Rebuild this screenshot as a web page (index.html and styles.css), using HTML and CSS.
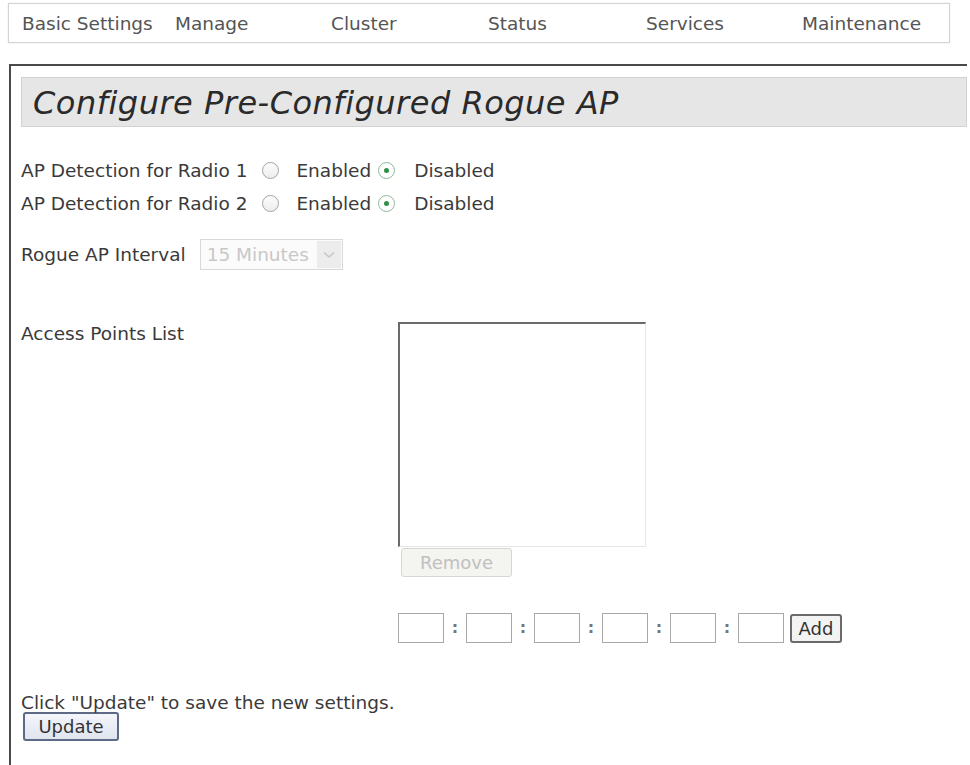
FILE: index.html
```html
<!DOCTYPE html>
<html>
<head>
<meta charset="utf-8">
<link rel="stylesheet" href="styles.css">
</head>
<body>
<nav class="nav">
  <span class="nav-item w1">Basic Settings</span>
  <span class="nav-item w2">Manage</span>
  <span class="nav-item w3">Cluster</span>
  <span class="nav-item w4">Status</span>
  <span class="nav-item w5">Services</span>
  <span class="nav-item">Maintenance</span>
</nav>
<div class="panel">
  <h1 class="title">Configure Pre-Configured Rogue AP</h1>
  <div class="content">
    <div class="radio-rows">
      <div class="row"><span class="row-label">AP Detection for Radio 1</span><span class="radio"></span><span class="opt">Enabled</span><span class="radio on"></span><span class="opt">Disabled</span></div>
      <div class="row"><span class="row-label">AP Detection for Radio 2</span><span class="radio"></span><span class="opt">Enabled</span><span class="radio on"></span><span class="opt">Disabled</span></div>
    </div>
    <div class="interval">
      <span>Rogue AP Interval</span>
      <span class="select"><span class="sel-text">15 Minutes</span><span class="sel-btn"><svg width="12" height="8" viewBox="0 0 12 8"><path d="M1 1.5 L6 6 L11 1.5" fill="none" stroke="#c8c8c8" stroke-width="1.6"/></svg></span></span>
    </div>
    <div class="list-section">
      <div class="list-label">Access Points List</div>
      <div class="list-col">
        <div class="listbox"></div>
        <button class="btn remove">Remove</button>
        <div class="mac-row">
          <span class="mac"></span><span class="colon">:</span>
          <span class="mac"></span><span class="colon">:</span>
          <span class="mac"></span><span class="colon">:</span>
          <span class="mac"></span><span class="colon">:</span>
          <span class="mac"></span><span class="colon">:</span>
          <span class="mac"></span>
          <button class="btn add">Add</button>
        </div>
      </div>
    </div>
    <div class="footer">
      <div class="hint">Click "Update" to save the new settings.</div>
      <button class="btn update">Update</button>
    </div>
  </div>
</div>
</body>
</html>
```
FILE: styles.css
```css
html, body {
  margin: 0;
  padding: 0;
  background: #fff;
  font-family: "DejaVu Sans", Verdana, sans-serif;
  color: #3a3a3a;
}
.nav {
  margin: 3px 0 0 8px;
  width: 927px;
  height: 38px;
  border: 1px solid #d4d4d4;
  box-shadow: 0 0 2px #e6e6e6;
  display: flex;
  align-items: center;
  padding-left: 13px;
  font-size: 18.5px;
  color: #555;
}
.nav-item { white-space: nowrap; }
.w1 { width: 153px; }
.w2 { width: 156px; }
.w3 { width: 157px; }
.w4 { width: 158px; }
.w5 { width: 156px; }
.panel {
  margin: 21px 0 0 9px;
  width: 956px;
  height: 700px;
  border-top: 2px solid #4a4a4a;
  border-left: 2px solid #4a4a4a;
}
.title {
  margin: 11px 0 0 10px;
  height: 48px;
  background: #e6e6e6;
  border: 1px solid #d2d2d2;
  font-weight: normal;
  font-style: italic;
  font-size: 32px;
  letter-spacing: 0.5px;
  line-height: 50px;
  padding-left: 11px;
  color: #2a2a2a;
}
.content {
  padding-left: 10px;
  font-size: 18.5px;
  line-height: 22px;
}
.radio-rows { margin-top: 33px; }
.row {
  height: 33px;
  display: flex;
  align-items: flex-start;
  white-space: nowrap;
}
.radio {
  flex: none;
  width: 17px;
  height: 17px;
  border: 1px solid #a4a4a4;
  border-radius: 50%;
  margin: 2px 17px 0 15px;
  box-sizing: border-box;
  position: relative;
  background: linear-gradient(#fdfdfd, #ececec);
}
.radio.on {
  margin: 2px 19px 0 7px;
  border-color: #8fb898;
  background: #fff;
}
.radio.on::after {
  content: "";
  position: absolute;
  left: 5px;
  top: 5px;
  width: 5px;
  height: 5px;
  border-radius: 50%;
  background: #2f8f48;
}
.interval {
  margin-top: 13px;
  display: flex;
  align-items: center;
  gap: 14px;
}
.select {
  display: inline-flex;
  align-items: center;
  width: 143px;
  height: 31px;
  border: 1px solid #d8d8d8;
  box-sizing: border-box;
  color: #c8c8c8;
  background: #fbfbfb;
  justify-content: space-between;
  padding-left: 6px;
}
.sel-btn {
  width: 24px;
  height: 27px;
  background: #ececec;
  margin-right: 1px;
  display: flex;
  align-items: center;
  justify-content: center;
}
.list-section {
  margin-top: 52px;
  display: flex;
}
.list-label {
  width: 377px;
  padding-top: 1px;
}
.list-col { display: flex; flex-direction: column; }
.listbox {
  width: 248px;
  height: 225px;
  border-top: 2px solid #6a6a6a;
  border-left: 2px solid #6a6a6a;
  border-right: 1px solid #e6e6e6;
  border-bottom: 1px solid #e6e6e6;
  box-sizing: border-box;
}
.btn {
  font-family: "DejaVu Sans", Verdana, sans-serif;
  font-size: 18px;
  border-radius: 3px;
  padding: 0;
}
.remove {
  margin: 1px 0 0 3px;
  width: 111px;
  height: 29px;
  border: 1px solid #d6d6d6;
  background: #f4f4f0;
  color: #c0c0c0;
}
.mac-row {
  margin-top: 36px;
  display: flex;
  align-items: center;
  height: 30px;
}
.mac {
  width: 46px;
  height: 30px;
  border: 1px solid #a8a8a8;
  box-sizing: border-box;
  background: #fff;
}
.colon {
  width: 22px;
  text-align: center;
  font-size: 16px;
  font-weight: bold;
  color: #777;
}
.add {
  margin-left: 6px;
  width: 52px;
  height: 29px;
  border: 2px solid #6a6a6a;
  background: #f3f3f3;
  color: #333;
}
.footer { margin-top: 49px; }
.hint { height: 20px; }
.update {
  display: block;
  margin: 0 0 0 2px;
  width: 96px;
  height: 29px;
  border: 2px solid #5d6a86;
  background: linear-gradient(#f4f6fb, #dfe4ee);
  color: #333;
}
```
